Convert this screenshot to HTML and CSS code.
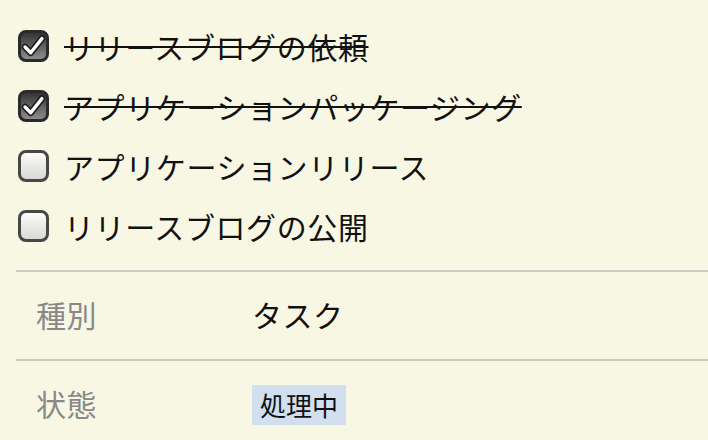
FILE: index.html
```html
<!DOCTYPE html>
<html lang="ja">
<head>
<meta charset="utf-8">
<link rel="stylesheet" href="styles.css">
</head>
<body>
<div class="page">
  <ul class="checklist">
    <li class="item done"><span class="box checked"><svg viewBox="0 0 24 24" width="27" height="27"><path d="M4.5 12.5 L9.5 17.5 L19.5 5" fill="none" stroke="#1e1e1e" stroke-width="6" stroke-linecap="round" stroke-linejoin="round"/><path d="M4.5 12.5 L9.5 17.5 L19.5 5" fill="none" stroke="#fff" stroke-width="3" stroke-linecap="round" stroke-linejoin="round"/></svg></span><span class="text">リリースブログの依頼</span></li>
    <li class="item done"><span class="box checked"><svg viewBox="0 0 24 24" width="27" height="27"><path d="M4.5 12.5 L9.5 17.5 L19.5 5" fill="none" stroke="#1e1e1e" stroke-width="6" stroke-linecap="round" stroke-linejoin="round"/><path d="M4.5 12.5 L9.5 17.5 L19.5 5" fill="none" stroke="#fff" stroke-width="3" stroke-linecap="round" stroke-linejoin="round"/></svg></span><span class="text">アプリケーションパッケージング</span></li>
    <li class="item"><span class="box"></span><span class="text">アプリケーションリリース</span></li>
    <li class="item"><span class="box"></span><span class="text">リリースブログの公開</span></li>
  </ul>
  <div class="fields">
    <div class="field">
      <span class="label">種別</span>
      <span class="value">タスク</span>
    </div>
    <div class="field">
      <span class="label">状態</span>
      <span class="value"><span class="badge">処理中</span></span>
    </div>
  </div>
</div>
</body>
</html>
```
FILE: styles.css
```css
html, body {
  margin: 0;
  padding: 0;
  background: #f8f7e4;
}
body {
  font-family: "Noto Sans CJK JP", "Noto Sans", sans-serif;
  color: #111;
  width: 708px;
  height: 440px;
  overflow: hidden;
}
.page {
  padding: 16px 0 0 16px;
}
.checklist {
  list-style: none;
  margin: 0;
  padding: 0 0 0 2px;
}
.item {
  display: flex;
  align-items: center;
  gap: 15px;
  height: 60px;
  font-size: 30px;
  letter-spacing: 0.6px;
}
.box {
  box-sizing: border-box;
  width: 31px;
  height: 32px;
  border: 3px solid #474747;
  border-radius: 8px;
  background: linear-gradient(#fbfbf8, #d9d9d6);
  display: flex;
  align-items: center;
  justify-content: center;
  flex: none;
}
.box.checked {
  background: linear-gradient(#353535, #8c8c8c);
  border-color: #2a2a2a;
}
.box svg {
  display: block;
  flex: none;
}
.text {
  line-height: 1;
}
.done .text {
  text-decoration: line-through;
  text-decoration-thickness: 2px;
}
.fields {
  margin-top: 14px;
}
.field {
  display: flex;
  align-items: center;
  height: 89px;
  border-top: 2px solid #cbcbc6;
  font-size: 30px;
  letter-spacing: 0.5px;
  padding-bottom: 3px;
  box-sizing: border-box;
}
.label {
  width: 236px;
  padding-left: 20px;
  color: #888;
  flex: none;
  box-sizing: border-box;
}
.value {
  color: #111;
}
.badge {
  display: inline-block;
  background: #d1dfee;
  font-size: 26px;
  letter-spacing: 0;
  line-height: 40px;
  padding: 0 8px;
}
```
